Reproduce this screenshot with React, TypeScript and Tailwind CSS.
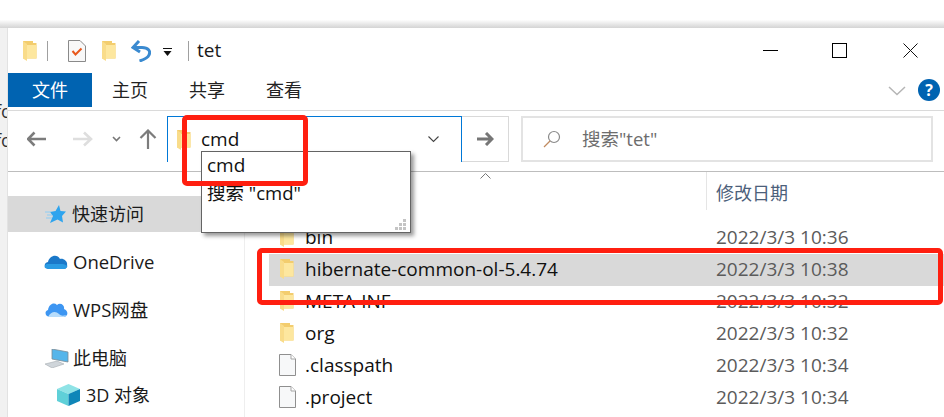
const FONT = "font-['Open_Sans','Noto_Sans_CJK_SC',sans-serif]";

function FolderIcon({ className = '' }: { className?: string }) {
  return (
    <svg viewBox="0 0 15 22" className={`w-[15px] h-[22px] shrink-0 ${className}`}>
      <path d="M1 1 H11 V3 H14.5 V18.5 H1 Z" fill="#f3cd6e" />
      <path d="M5 5 H14.5 V18.5 H5 Z" fill="#fde79f" />
      <path d="M1 1 L5 4 V21 L1 18.5 Z" fill="#f9dc8a" />
    </svg>
  );
}

function FileIcon() {
  return (
    <svg viewBox="0 0 17 22" className="w-[17px] h-[22px] shrink-0">
      <path d="M0.5 0.5 H12 L16.5 5 V21.5 H0.5 Z" fill="#f7f8f9" stroke="#8f8f8f" />
      <path d="M12 0.5 V5 H16.5" fill="#fff" stroke="#a5a5a5" />
    </svg>
  );
}

function FileRow({ name, date, kind, selected }: { name: string; date: string; kind: 'folder' | 'file'; selected?: boolean }) {
  return (
    <div className={`h-[32px] flex items-center pl-[10px] pb-[2px] text-[19px] ${selected ? 'bg-[#d9d9d9]' : ''}`}>
      <div className="w-[26px] flex">{kind === 'folder' ? <FolderIcon /> : <FileIcon />}</div>
      <span className="w-[411px] text-[#101010]">{name}</span>
      <span className="text-[#5b5b5b]">{date}</span>
    </div>
  );
}

function SideRow({ icon, label, className = '' }: { icon: React.ReactNode; label: string; className?: string }) {
  return (
    <div className={`flex items-center ${className}`}>
      {icon}
      <span className="text-[#1a1a1a]">{label}</span>
    </div>
  );
}

export default function App() {
  return (
    <div className={`w-[944px] h-[417px] overflow-hidden relative bg-white flex flex-col text-[18px] leading-none ${FONT}`}>
      {/* strip above the window */}
      <div className="h-[28px] shrink-0 bg-gradient-to-b from-white from-70% to-[#d4d4d4]" />

      <div className="flex-1 flex min-h-0">
        {/* the window behind */}
        <div className="w-[8px] shrink-0 bg-[#f1f1f1] overflow-hidden text-[#333] pt-[74px] flex flex-col gap-[9px] border-r border-[#e2e2e2]">
          <span className="-ml-[5px] h-[20px]">fo</span>
          <span className="-ml-[5px] h-[20px]">fo</span>
        </div>

        <div className="flex-1 flex flex-col min-w-0">
          {/* title bar */}
          <div className="h-[45px] shrink-0 flex items-center pl-[14px]">
            <FolderIcon />
            <div className="w-px h-[20px] bg-[#a0a0a0] ml-[10px]" />
            <svg viewBox="0 0 18 22" className="w-[18px] h-[22px] ml-[20px]">
              <path d="M0.5 0.5 H12 L17.5 6 V21.5 H0.5 Z" fill="#f8f8f8" stroke="#8a8a8a" />
              <path d="M4.5 11 L7.5 14.5 L13.5 8.5" fill="none" stroke="#e8581c" strokeWidth="2" />
            </svg>
            <FolderIcon className="ml-[15px]" />
            <svg viewBox="0 0 20 22" className="w-[20px] h-[22px] ml-[15px]">
              <path d="M3 7.5 H11 C17 7.5 20 11 18 15 C16.5 18.5 12 20 8.5 21" fill="none" stroke="#3a8ad0" strokeWidth="3" />
              <path d="M8 1 L2 7.5 L9 12" fill="none" stroke="#3a8ad0" strokeWidth="3" />
            </svg>
            <svg viewBox="0 0 9 9" className="w-[9px] h-[9px] ml-[12px] mt-[3px]">
              <rect x="0" y="0" width="9" height="1" fill="#111" />
              <path d="M0.5 3 H8.5 L4.5 8 Z" fill="#111" />
            </svg>
            <div className="w-px h-[20px] bg-[#a0a0a0] ml-[16px]" />
            <span className="ml-[8px] text-[#1a1a1a] text-[19px]">tet</span>
            <div className="ml-auto flex items-center pr-[26px]">
              <div className="w-[15px] h-px bg-black" />
              <div className="w-[15px] h-[15px] border border-black ml-[54px]" />
              <svg viewBox="0 0 15 15" className="w-[15px] h-[15px] ml-[56px]">
                <path d="M0.5 0.5 L14.5 14.5 M14.5 0.5 L0.5 14.5" stroke="#111" strokeWidth="1" />
              </svg>
            </div>
          </div>

          {/* ribbon tabs */}
          <div className="h-[38px] shrink-0 flex border-b border-[#dadada] pb-[3px]">
            <div className="w-[84px] bg-[#0063b1] text-white flex items-center justify-center">文件</div>
            <div className="ml-[20px] w-[36px] flex items-center text-[#222]">主页</div>
            <div className="ml-[41px] w-[36px] flex items-center text-[#222]">共享</div>
            <div className="ml-[41px] w-[36px] flex items-center text-[#222]">查看</div>
            <div className="ml-auto flex items-center pr-[4px]">
              <svg viewBox="0 0 18 10" className="w-[18px] h-[10px] mt-[2px]">
                <path d="M1 1 L9 8.5 L17 1" fill="none" stroke="#b5b5b5" strokeWidth="1.5" />
              </svg>
              <div className="w-[22px] h-[22px] rounded-full bg-[#0063b1] text-white text-[16px] font-bold flex items-center justify-center ml-[12px]">?</div>
            </div>
          </div>

          {/* address row */}
          <div className="h-[61px] shrink-0 flex items-start pt-[5px] border-b border-[#bdbdbd]">
            <div className="w-[159px] h-[46px] flex items-center pl-[19px] shrink-0">
              <svg viewBox="0 0 20 16" className="w-[20px] h-[16px]">
                <path d="M7.5 1.5 L1 8 L7.5 14.5 M1 8 H19" fill="none" stroke="#7c7c7c" strokeWidth="2.6" />
              </svg>
              <svg viewBox="0 0 20 16" className="w-[20px] h-[16px] ml-[26px]">
                <path d="M11 1.5 L18 8 L11 14.5 M18 8 H0" fill="none" stroke="#dedede" strokeWidth="2.6" />
              </svg>
              <svg viewBox="0 0 9 6" className="w-[9px] h-[6px] ml-[19px]">
                <path d="M1 1 L4.5 4.5 L8 1" fill="none" stroke="#777" strokeWidth="1.6" />
              </svg>
              <svg viewBox="0 0 18 20" className="w-[18px] h-[20px] ml-[18px]">
                <path d="M1.5 9 L9 1.5 L16.5 9 M9 2 V20" fill="none" stroke="#7c7c7c" strokeWidth="2.2" />
              </svg>
            </div>
            <div className="w-[295px] h-[46px] border border-b-0 border-[#0078d7] flex items-center pl-[8px] pr-[22px] shrink-0">
              <FolderIcon />
              <span className="ml-[10px] text-[#111] text-[19px]">cmd</span>
              <svg viewBox="0 0 11 7" className="w-[11px] h-[7px] ml-auto">
                <path d="M0.5 0.5 L5.5 5.5 L10.5 0.5" fill="none" stroke="#444" strokeWidth="1.1" />
              </svg>
            </div>
            <div className="w-[47px] h-[46px] border border-l-0 border-[#d9d9d9] flex items-center justify-center shrink-0">
              <svg viewBox="0 0 17 14" className="w-[17px] h-[14px]">
                <path d="M9 1 L15 7 L9 13 M15 7 H0" fill="none" stroke="#767676" strokeWidth="3" />
              </svg>
            </div>
            <div className="w-[412px] h-[46px] ml-[12px] border-2 border-[#e3e3e3] flex items-center pl-[20px] shrink-0">
              <svg viewBox="0 0 18 18" className="w-[18px] h-[18px]">
                <circle cx="11" cy="7" r="5.5" fill="none" stroke="#8a8a8a" strokeWidth="1.2" />
                <path d="M7 11 L1 17" stroke="#c08a60" strokeWidth="1.3" />
              </svg>
              <span className="ml-[21px] text-[#6d6d6d] text-[18.5px]">搜索"tet"</span>
            </div>
          </div>

          {/* body */}
          <div className="flex-1 flex min-h-0">
            <div className="w-[237px] shrink-0 border-r border-[#eeeeee] overflow-hidden pt-[24px] flex flex-col">
              <SideRow
                className="h-[36px] bg-[#d9d9d9] pl-[39px]"
                label="快速访问"
                icon={
                  <svg viewBox="0 0 21 20" className="w-[21px] h-[20px] mr-[6px] -ml-[2px]">
                    <path d="M14 1 L15.5 7 L21 7.5 L17 12 L18 18.5 L12.5 15.5 L5 19 L8 12 L5 8 L10.5 7 Z" fill="#2ea4ee" />
                    <path d="M0 8 H6 M2 11 H7 M1 14 H7" stroke="#8ccdf5" strokeWidth="1" />
                  </svg>
                }
              />
              <SideRow
                className="h-[48px] mt-[6px] pl-[36px] text-[18.5px]"
                label="OneDrive"
                icon={
                  <svg viewBox="0 0 24 16" className="w-[24px] h-[16px] mr-[5px]">
                    <path d="M5 15 C0 15 -1 9 4 8 C5 2 13 -1 16 5 C20 4 24 8 23 11 C24 13 22 15 20 15 Z" fill="#1a78c9" />
                    <path d="M1 14 C0 12 1 10 4 10 H17 C21 10 24 12 23 13 L21 15 H5 Z" fill="#2a9be3" />
                  </svg>
                }
              />
              <SideRow
                className="h-[48px] pl-[37px] text-[18.5px]"
                label="WPS网盘"
                icon={
                  <svg viewBox="0 0 23 16" className="w-[23px] h-[16px] mr-[5px]">
                    <path d="M5 15 C0 15 -1 9 3 8 C4 2 9 0 12 3 C15 0 20 3 19 7 C23 8 24 14 19 15 Z" fill="#3d96f2" />
                    <path d="M3 15 C6 9 11 9 14 12 C16 14 18 14 21 13 C20 15 19 15 18 15 Z" fill="#b7dcfb" />
                  </svg>
                }
              />
              <SideRow
                className="h-[48px] pl-[37px]"
                label="此电脑"
                icon={
                  <svg viewBox="0 0 24 19" className="w-[24px] h-[19px] mr-[4px]">
                    <path d="M7 0 L23 3 V13 L7 10 Z" fill="#55b5ea" stroke="#7b8b96" strokeWidth="0.8" />
                    <path d="M0 15 L12 12 L19 15 L7 19 Z" fill="#cfd5da" stroke="#9aa1a6" strokeWidth="0.5" />
                  </svg>
                }
              />
              <SideRow
                className="h-[26px] pl-[49px]"
                label="3D 对象"
                icon={
                  <svg viewBox="0 0 23 22" className="w-[23px] h-[22px] mr-[6px]">
                    <path d="M11.5 0 L23 5 L11.5 10 L0 5 Z" fill="#8fe3e6" />
                    <path d="M0 5 L11.5 10 V22 L0 17 Z" fill="#5fd0d8" />
                    <path d="M23 5 L11.5 10 V22 L23 17 Z" fill="#0f86b8" />
                  </svg>
                }
              />
            </div>

            <div className="flex-1 min-w-0">
              {/* column header */}
              <div className="h-[50px] flex pl-[461px]">
                <div className="w-px h-[38px] bg-[#e5e5e5]" />
                <span className="ml-[9px] mt-[12px] text-[#4c607a]">修改日期</span>
              </div>
              <div className="pl-[24px]">
                <FileRow name="bin" date="2022/3/3 10:36" kind="folder" />
                <FileRow name="hibernate-common-ol-5.4.74" date="2022/3/3 10:38" kind="folder" selected />
                <FileRow name="META-INF" date="2022/3/3 10:32" kind="folder" />
                <FileRow name="org" date="2022/3/3 10:32" kind="folder" />
                <FileRow name=".classpath" date="2022/3/3 10:34" kind="file" />
                <FileRow name=".project" date="2022/3/3 10:34" kind="file" />
              </div>
            </div>
          </div>
        </div>
      </div>

      {/* sort caret */}
      <svg viewBox="0 0 11 6" className="absolute left-[480px] top-[173px] w-[11px] h-[6px]">
        <path d="M0.5 5.5 L5.5 0.5 L10.5 5.5" fill="none" stroke="#777" strokeWidth="1" />
      </svg>

      {/* autocomplete popup */}
      <div className="absolute left-[201px] top-[151px] w-[210px] h-[82px] bg-white border border-[#646464] shadow-[3px_3px_4px_rgba(0,0,0,0.4)] pl-[5px] text-[#111]">
        <div className="h-[27px] flex items-center text-[19px]">cmd</div>
        <div className="h-[28px] flex items-center text-[18.5px]">搜索 "cmd"</div>
        <svg viewBox="0 0 12 12" className="absolute right-[3px] bottom-[1px] w-[12px] h-[12px]">
          <path d="M8 0 h3 v3 h-3 Z M4 4 h3 v3 h-3 Z M8 4 h3 v3 h-3 Z M0 8 h3 v3 h-3 Z M4 8 h3 v3 h-3 Z M8 8 h3 v3 h-3 Z" fill="#c4c4c4" />
        </svg>
      </div>

      {/* red annotation boxes */}
      <div className="absolute left-[182px] top-[115px] w-[126px] h-[71px] border-[5px] border-[#ff1f10] rounded-[5px]" />
      <div className="absolute left-[257px] top-[248px] w-[686px] h-[57px] border-[5px] border-[#ff1f10] rounded-[5px]" />
    </div>
  );
}
